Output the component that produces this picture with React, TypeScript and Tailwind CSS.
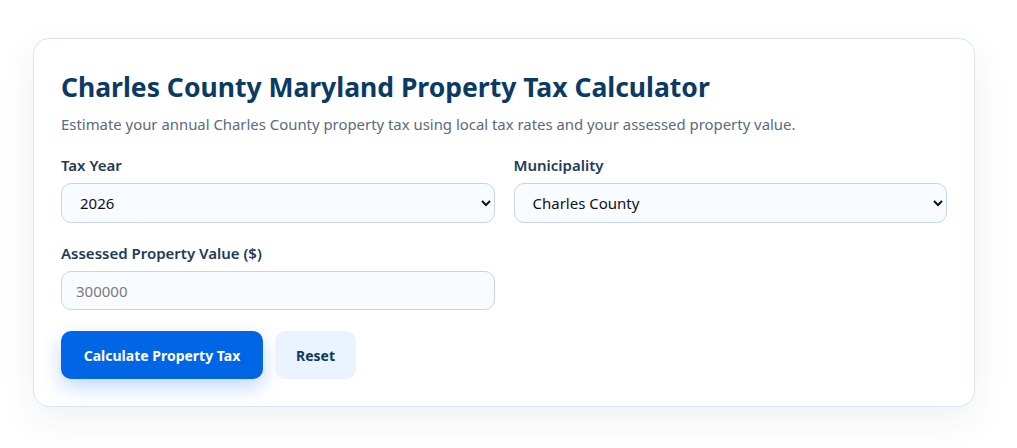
import React from "react";

export default function App() {
  return (
    <div className="min-h-[448px] w-full bg-white pt-[38px] pl-[33px] font-['Noto_Sans','Open_Sans',sans-serif]">
      <div className="w-[942px] rounded-[16px] border border-[#d8e4f0] bg-white px-[27px] pt-[30px] pb-[27px] shadow-[0_12px_36px_rgba(15,40,80,0.07)]">
        <h1 className="text-[26.5px] font-bold leading-[36px] text-[#0b3a63]">
          Charles County Maryland Property Tax Calculator
        </h1>
        <p className="mt-[8px] text-[14.9px] leading-[22px] text-[#5a6a7e]">
          Estimate your annual Charles County property tax using local tax rates and your assessed property value.
        </p>
        <div className="mt-[19px] grid grid-cols-2 gap-x-[19px] gap-y-[19px]">
          <div className="flex flex-col">
            <label className="text-[15px] font-semibold leading-[22px] text-[#1d3b57]">Tax Year</label>
            <select className="mt-[7px] h-[40px] rounded-[10px] border border-[#c5d6e8] bg-[#f8fbff] px-[14px] text-[15px] text-[#111]">
              <option>2026</option>
            </select>
          </div>
          <div className="flex flex-col">
            <label className="text-[15px] font-semibold leading-[22px] text-[#1d3b57]">Municipality</label>
            <select className="mt-[7px] h-[40px] rounded-[10px] border border-[#c5d6e8] bg-[#f8fbff] px-[14px] text-[15px] text-[#111]">
              <option>Charles County</option>
            </select>
          </div>
          <div className="flex flex-col">
            <label className="text-[15px] font-semibold leading-[22px] text-[#1d3b57]">Assessed Property Value ($)</label>
            <input
              placeholder="300000"
              className="mt-[7px] h-[39px] rounded-[10px] border border-[#c5d6e8] bg-[#f8fbff] px-[14px] text-[15px] text-[#111] placeholder:text-[#7a7a7a]"
            />
          </div>
        </div>
        <div className="mt-[21px] flex gap-[12px]">
          <button className="h-[48px] w-[202px] rounded-[10px] bg-[#0066e6] text-[14px] font-bold text-white shadow-[0_8px_20px_rgba(0,102,230,0.25)]">
            Calculate Property Tax
          </button>
          <button className="h-[48px] w-[81px] rounded-[10px] bg-[#eaf3ff] text-[14px] font-bold text-[#0b3a5a]">
            Reset
          </button>
        </div>
      </div>
    </div>
  );
}
